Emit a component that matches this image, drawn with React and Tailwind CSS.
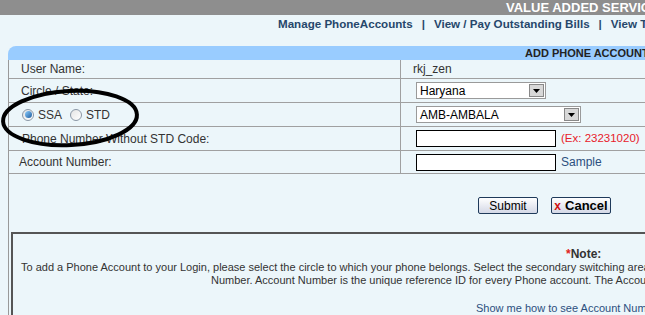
import React from "react";

function Radio({ checked }) {
  return (
    <span className="inline-flex h-[12px] w-[12px] items-center justify-center rounded-full border border-[#8a97a6] bg-gradient-to-br from-[#e4e4e4] to-white">
      {checked && (
        <span className="h-[7px] w-[7px] rounded-full bg-gradient-to-br from-[#8fd0ff] to-[#1b5c9e]" />
      )}
    </span>
  );
}

function Select({ value, width }) {
  return (
    <div className={`flex h-[17px] items-center justify-between border border-[#9a9a9a] bg-white pl-[3px] ${width}`}>
      <span className="text-[12px] text-black">{value}</span>
      <span className="mr-[1px] flex h-[13px] w-[15px] items-center justify-center border border-[#888] bg-[#d8d8d8]">
        <svg width="7" height="4" viewBox="0 0 7 4">
          <path d="M0 0h7L3.5 4z" fill="#000" />
        </svg>
      </span>
    </div>
  );
}

function App() {
  return (
    <div className="relative h-[315px] w-[645px] overflow-hidden bg-[#ecf6fa] font-['Liberation_Sans',Arial,sans-serif] text-[11px] text-[#333]">
      {/* top bar */}
      <div className="h-[15px] whitespace-nowrap bg-[#8e8e8e] pl-[506px] text-[13px] font-bold leading-[16px] text-white">
        VALUE ADDED SERVICES
      </div>
      <div className="flex h-[16px] items-end gap-[9px] whitespace-nowrap pl-[278px] text-[11.6px] font-bold leading-[14px] text-[#26476b]">
        <span>Manage PhoneAccounts</span>
        <span>|</span>
        <span>View / Pay Outstanding Bills</span>
        <span>|</span>
        <span>View Transactions</span>
      </div>

      <div className="ml-[8px] mt-[15px] w-[760px]">
        <div className="h-[14px] whitespace-nowrap rounded-tl-[8px] bg-[#99ccff] pl-[517px] text-[11px] font-bold leading-[15px] text-[#222]">
          ADD PHONE ACCOUNT
        </div>

        <div className="border-l border-[#999]">
          {/* form rows */}
          <div className="grid grid-cols-[391px_1fr]">
            <div className="flex h-[19px] items-center border-b border-[#a0a0a0] pl-[12px] text-[12px]">User Name:</div>
            <div className="flex h-[19px] items-center border-b border-l border-[#a0a0a0] pl-[12px] text-[12px]">rkj_zen</div>

            <div className="flex h-[24px] items-center border-b border-[#a0a0a0] pl-[12px] text-[12px]">Circle / State:</div>
            <div className="flex h-[24px] items-center border-b border-l border-[#a0a0a0] pl-[15px]">
              <Select value="Haryana" width="w-[130px]" />
            </div>

            <div className="flex h-[24px] items-center gap-[4px] border-b border-[#a0a0a0] pl-[13px] text-[12px]">
              <Radio checked />
              <span className="mr-[4px]">SSA</span>
              <Radio />
              <span>STD</span>
            </div>
            <div className="flex h-[24px] items-center border-b border-l border-[#a0a0a0] pl-[15px]">
              <Select value="AMB-AMBALA" width="w-[165px]" />
            </div>

            <div className="flex h-[24px] items-center border-b border-[#a0a0a0] pl-[13px] text-[12px]">Phone Number Without STD Code:</div>
            <div className="flex h-[24px] items-center gap-[5px] border-b border-l border-[#a0a0a0] pl-[15px]">
              <div className="h-[17px] w-[140px] border border-black bg-white" />
              <span className="text-[11.5px] text-[#e8202a]">(Ex: 23231020)</span>
            </div>

            <div className="flex h-[23px] items-center border-b border-[#a0a0a0] pl-[10px] text-[12px]">Account Number:</div>
            <div className="flex h-[23px] items-center gap-[5px] border-b border-l border-[#a0a0a0] pl-[15px]">
              <div className="h-[17px] w-[140px] border border-black bg-white" />
              <span className="text-[12px] text-[#2b4f7e]">Sample</span>
            </div>
          </div>

          {/* buttons */}
          <div className="flex h-[58px] items-center gap-[13px] pl-[469px] pt-[5px]">
            <button className="h-[17px] w-[60px] rounded-[2px] border border-[#1f3a5a] bg-gradient-to-b from-white to-[#d4d8e6] text-[12px] leading-[14px] text-black">
              Submit
            </button>
            <button className="flex h-[17px] w-[60px] items-center justify-center gap-[4px] rounded-[2px] border border-[#1f3a5a] bg-gradient-to-b from-white to-[#d4d8e6] text-[13px] font-bold leading-[14px] text-black">
              <span className="text-[12px] font-bold text-[#d01010]">x</span>
              Cancel
            </button>
          </div>

          {/* note */}
          <div className="ml-[2px] h-[90px] border-l-2 border-t-2 border-[#555] pt-[13px] text-[11px]">
            <div className="whitespace-nowrap pl-[553px] text-[12px] font-bold leading-[14px] text-[#333]">
              <span className="text-[#e02020]">*</span>Note:
            </div>
            <div className="whitespace-nowrap pl-[8px] leading-[13px]">
              To add a Phone Account to your Login, please select the circle to which your phone belongs. Select the secondary switching area and enter your Phone
            </div>
            <div className="whitespace-nowrap pl-[198px] leading-[13px]">
              Number. Account Number is the unique reference ID for every Phone account. The Account Number is printed on your bill.
            </div>
            <div className="mt-[15px] whitespace-nowrap pl-[463px] leading-[13px] text-[#2b4f7e]">
              Show me how to see Account Number in my bill
            </div>
          </div>
        </div>
      </div>

      {/* hand-drawn ellipse over the radio row */}
      <svg className="pointer-events-none absolute left-0 top-0" width="645" height="315">
        <ellipse cx="70" cy="118" rx="67" ry="27" fill="none" stroke="#000" strokeWidth="4" transform="rotate(-3 70 118)" />
      </svg>
    </div>
  );
}

export default App;
